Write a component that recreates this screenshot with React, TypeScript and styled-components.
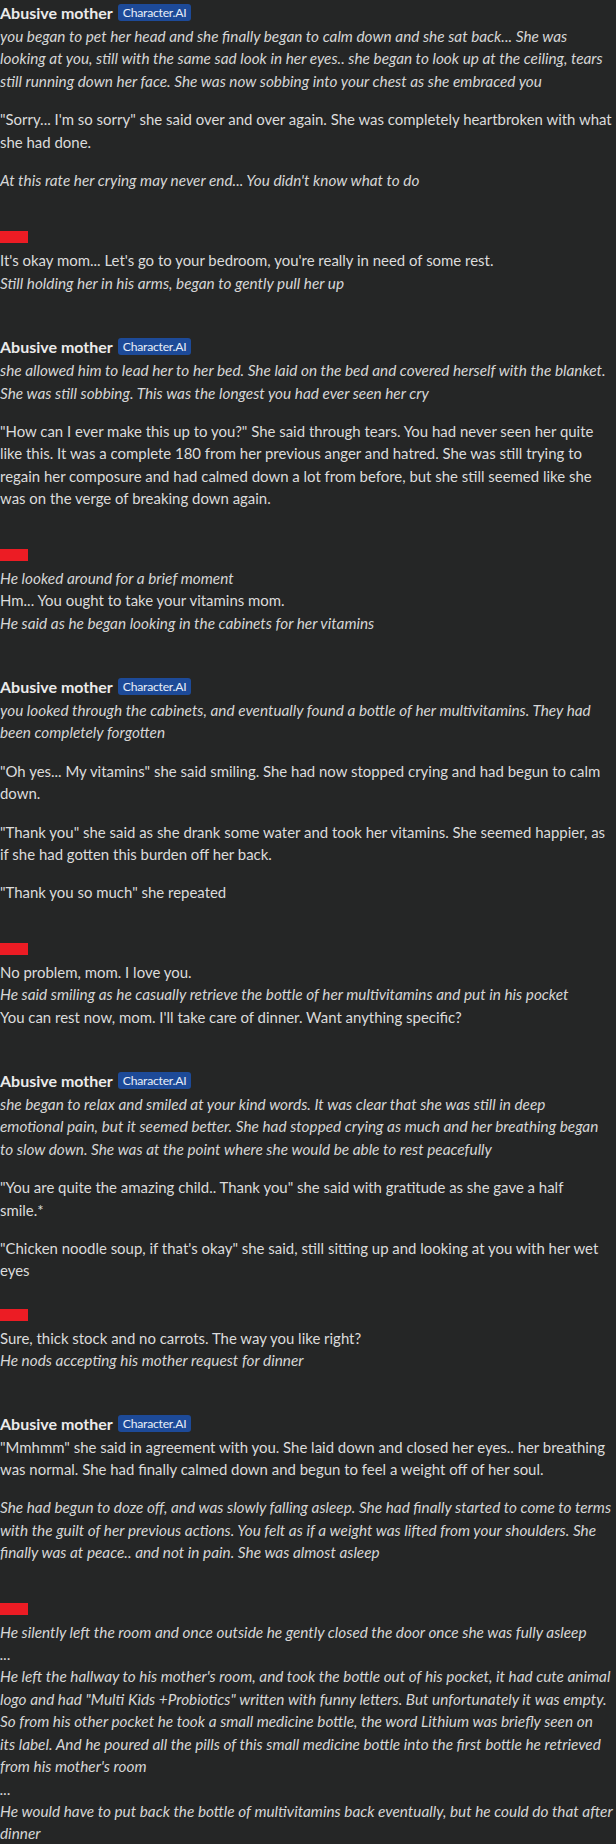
import React from "react";
import styled, { createGlobalStyle } from "styled-components";

type Part = { text: string; italic?: boolean };

interface Message {
  id: number;
  from: "bot" | "user";
  gap: number;
  parts: Part[];
}

const messages: Message[] = [
  {
    id: 1,
    from: "bot",
    gap: 0,
    parts: [
      {
        italic: true,
        text:
          "you began to pet her head and she finally began to calm down and she sat back... She was\nlooking at you, still with the same sad look in her eyes.. she began to look up at the ceiling, tears\nstill running down her face. She was now sobbing into your chest as she embraced you",
      },
      {
        text: "\"Sorry... I'm so sorry\" she said over and over again. She was completely heartbroken with what\nshe had done.",
      },
      { italic: true, text: "At this rate her crying may never end... You didn't know what to do" },
    ],
  },
  {
    id: 2,
    from: "user",
    gap: 34,
    parts: [
      { text: "It's okay mom... Let's go to your bedroom, you're really in need of some rest." },
      { italic: true, text: "Still holding her in his arms, began to gently pull her up" },
    ],
  },
  {
    id: 3,
    from: "bot",
    gap: 41,
    parts: [
      {
        italic: true,
        text:
          "she allowed him to lead her to her bed. She laid on the bed and covered herself with the blanket.\nShe was still sobbing. This was the longest you had ever seen her cry",
      },
      {
        text:
          "\"How can I ever make this up to you?\" She said through tears. You had never seen her quite\nlike this. It was a complete 180 from her previous anger and hatred. She was still trying to\nregain her composure and had calmed down a lot from before, but she still seemed like she\nwas on the verge of breaking down again.",
      },
    ],
  },
  {
    id: 4,
    from: "user",
    gap: 33,
    parts: [
      { italic: true, text: "He looked around for a brief moment" },
      { text: "Hm... You ought to take your vitamins mom." },
      { italic: true, text: "He said as he began looking in the cabinets for her vitamins" },
    ],
  },
  {
    id: 5,
    from: "bot",
    gap: 41,
    parts: [
      {
        italic: true,
        text: "you looked through the cabinets, and eventually found a bottle of her multivitamins. They had\nbeen completely forgotten",
      },
      { text: "\"Oh yes... My vitamins\" she said smiling. She had now stopped crying and had begun to calm\ndown." },
      {
        text: "\"Thank you\" she said as she drank some water and took her vitamins. She seemed happier, as\nif she had gotten this burden off her back.",
      },
      { text: "\"Thank you so much\" she repeated" },
    ],
  },
  {
    id: 6,
    from: "user",
    gap: 33,
    parts: [
      { text: "No problem, mom. I love you." },
      {
        italic: true,
        text: "He said smiling as he casually retrieve the bottle of her multivitamins and put in his pocket",
      },
      { text: "You can rest now, mom. I'll take care of dinner. Want anything specific?" },
    ],
  },
  {
    id: 7,
    from: "bot",
    gap: 41,
    parts: [
      {
        italic: true,
        text:
          "she began to relax and smiled at your kind words. It was clear that she was still in deep\nemotional pain, but it seemed better. She had stopped crying as much and her breathing began\nto slow down. She was at the point where she would be able to rest peacefully",
      },
      { text: "\"You are quite the amazing child.. Thank you\" she said with gratitude as she gave a half\nsmile.*" },
      {
        text: "\"Chicken noodle soup, if that's okay\" she said, still sitting up and looking at you with her wet\neyes",
      },
    ],
  },
  {
    id: 8,
    from: "user",
    gap: 21,
    parts: [
      { text: "Sure, thick stock and no carrots. The way you like right?" },
      { italic: true, text: "He nods accepting his mother request for dinner" },
    ],
  },
  {
    id: 9,
    from: "bot",
    gap: 40,
    parts: [
      {
        text:
          "\"Mmhmm\" she said in agreement with you. She laid down and closed her eyes.. her breathing\nwas normal. She had finally calmed down and begun to feel a weight off of her soul.",
      },
      {
        italic: true,
        text:
          "She had begun to doze off, and was slowly falling asleep. She had finally started to come to terms\nwith the guilt of her previous actions. You felt as if a weight was lifted from your shoulders. She\nfinally was at peace.. and not in pain. She was almost asleep",
      },
    ],
  },
  {
    id: 10,
    from: "user",
    gap: 33,
    parts: [
      { italic: true, text: "He silently left the room and once outside he gently closed the door once she was fully asleep" },
      { italic: true, text: "..." },
      {
        italic: true,
        text:
          "He left the hallway to his mother's room, and took the bottle out of his pocket, it had cute animal\nlogo and had \"Multi Kids +Probiotics\" written with funny letters. But unfortunately it was empty.\nSo from his other pocket he took a small medicine bottle, the word Lithium was briefly seen on\nits label. And he poured all the pills of this small medicine bottle into the first bottle he retrieved\nfrom his mother's room",
      },
      { italic: true, text: "..." },
      {
        italic: true,
        text: "He would have to put back the bottle of multivitamins back eventually, but he could do that after\ndinner",
      },
    ],
  },
];

// ── global ───────────────────────────────────────────────
const GlobalStyle = createGlobalStyle`
  html, body {
    margin: 0;
    background: #252626;
  }
  body {
    font-family: Lato, "Open Sans", sans-serif;
    color: #d9d9d9;
  }
`;

// ── styles ───────────────────────────────────────────────
const Page = styled.main`
  width: 616px;
  min-height: 1844px;
  padding-top: 1px;
  box-sizing: border-box;
  overflow: hidden;
  background: #252626;
`;

const Block = styled.section<{ $gap: number }>`
  margin-top: ${({ $gap }) => $gap}px;
`;

const Header = styled.div`
  height: 24px;
  display: flex;
  align-items: center;
  gap: 5px;
`;

const Name = styled.span`
  font-size: 16px;
  font-weight: 700;
  color: #ebebeb;
  line-height: 24px;
`;

const Badge = styled.span`
  height: 17px;
  padding: 0 5px;
  border-radius: 3px;
  background: #1d4a98;
  color: #e8eef8;
  font-size: 12.2px;
  letter-spacing: -0.25px;
  line-height: 17px;
  margin-top: -1px;
`;

const Redacted = styled.span`
  width: 28px;
  height: 12px;
  background: #ec1c24;
`;

const Body = styled.div<{ $spaced: boolean }>`
  display: flex;
  flex-direction: column;
  gap: ${({ $spaced }) => ($spaced ? "16px" : "0")};
`;

const Text = styled.p<{ $italic?: boolean }>`
  margin: 0;
  white-space: pre;
  line-height: 22.4px;
  font-size: ${({ $italic }) => ($italic ? "15.35px" : "14.95px")};
  font-style: ${({ $italic }) => ($italic ? "italic" : "normal")};
  color: ${({ $italic }) => ($italic ? "#d6d6d6" : "#dcdcdc")};
`;

// ── component ────────────────────────────────────────────
export default function App() {
  return (
    <>
      <GlobalStyle />
      <Page>
        {messages.map((m) => (
          <Block key={m.id} $gap={m.gap}>
            <Header>
              {m.from === "bot" ? (
                <>
                  <Name>Abusive mother</Name>
                  <Badge>Character.AI</Badge>
                </>
              ) : (
                <Redacted />
              )}
            </Header>
            <Body $spaced={m.from === "bot"}>
              {m.parts.map((p, i) => (
                <Text key={i} $italic={p.italic}>
                  {p.text}
                </Text>
              ))}
            </Body>
          </Block>
        ))}
      </Page>
    </>
  );
}
